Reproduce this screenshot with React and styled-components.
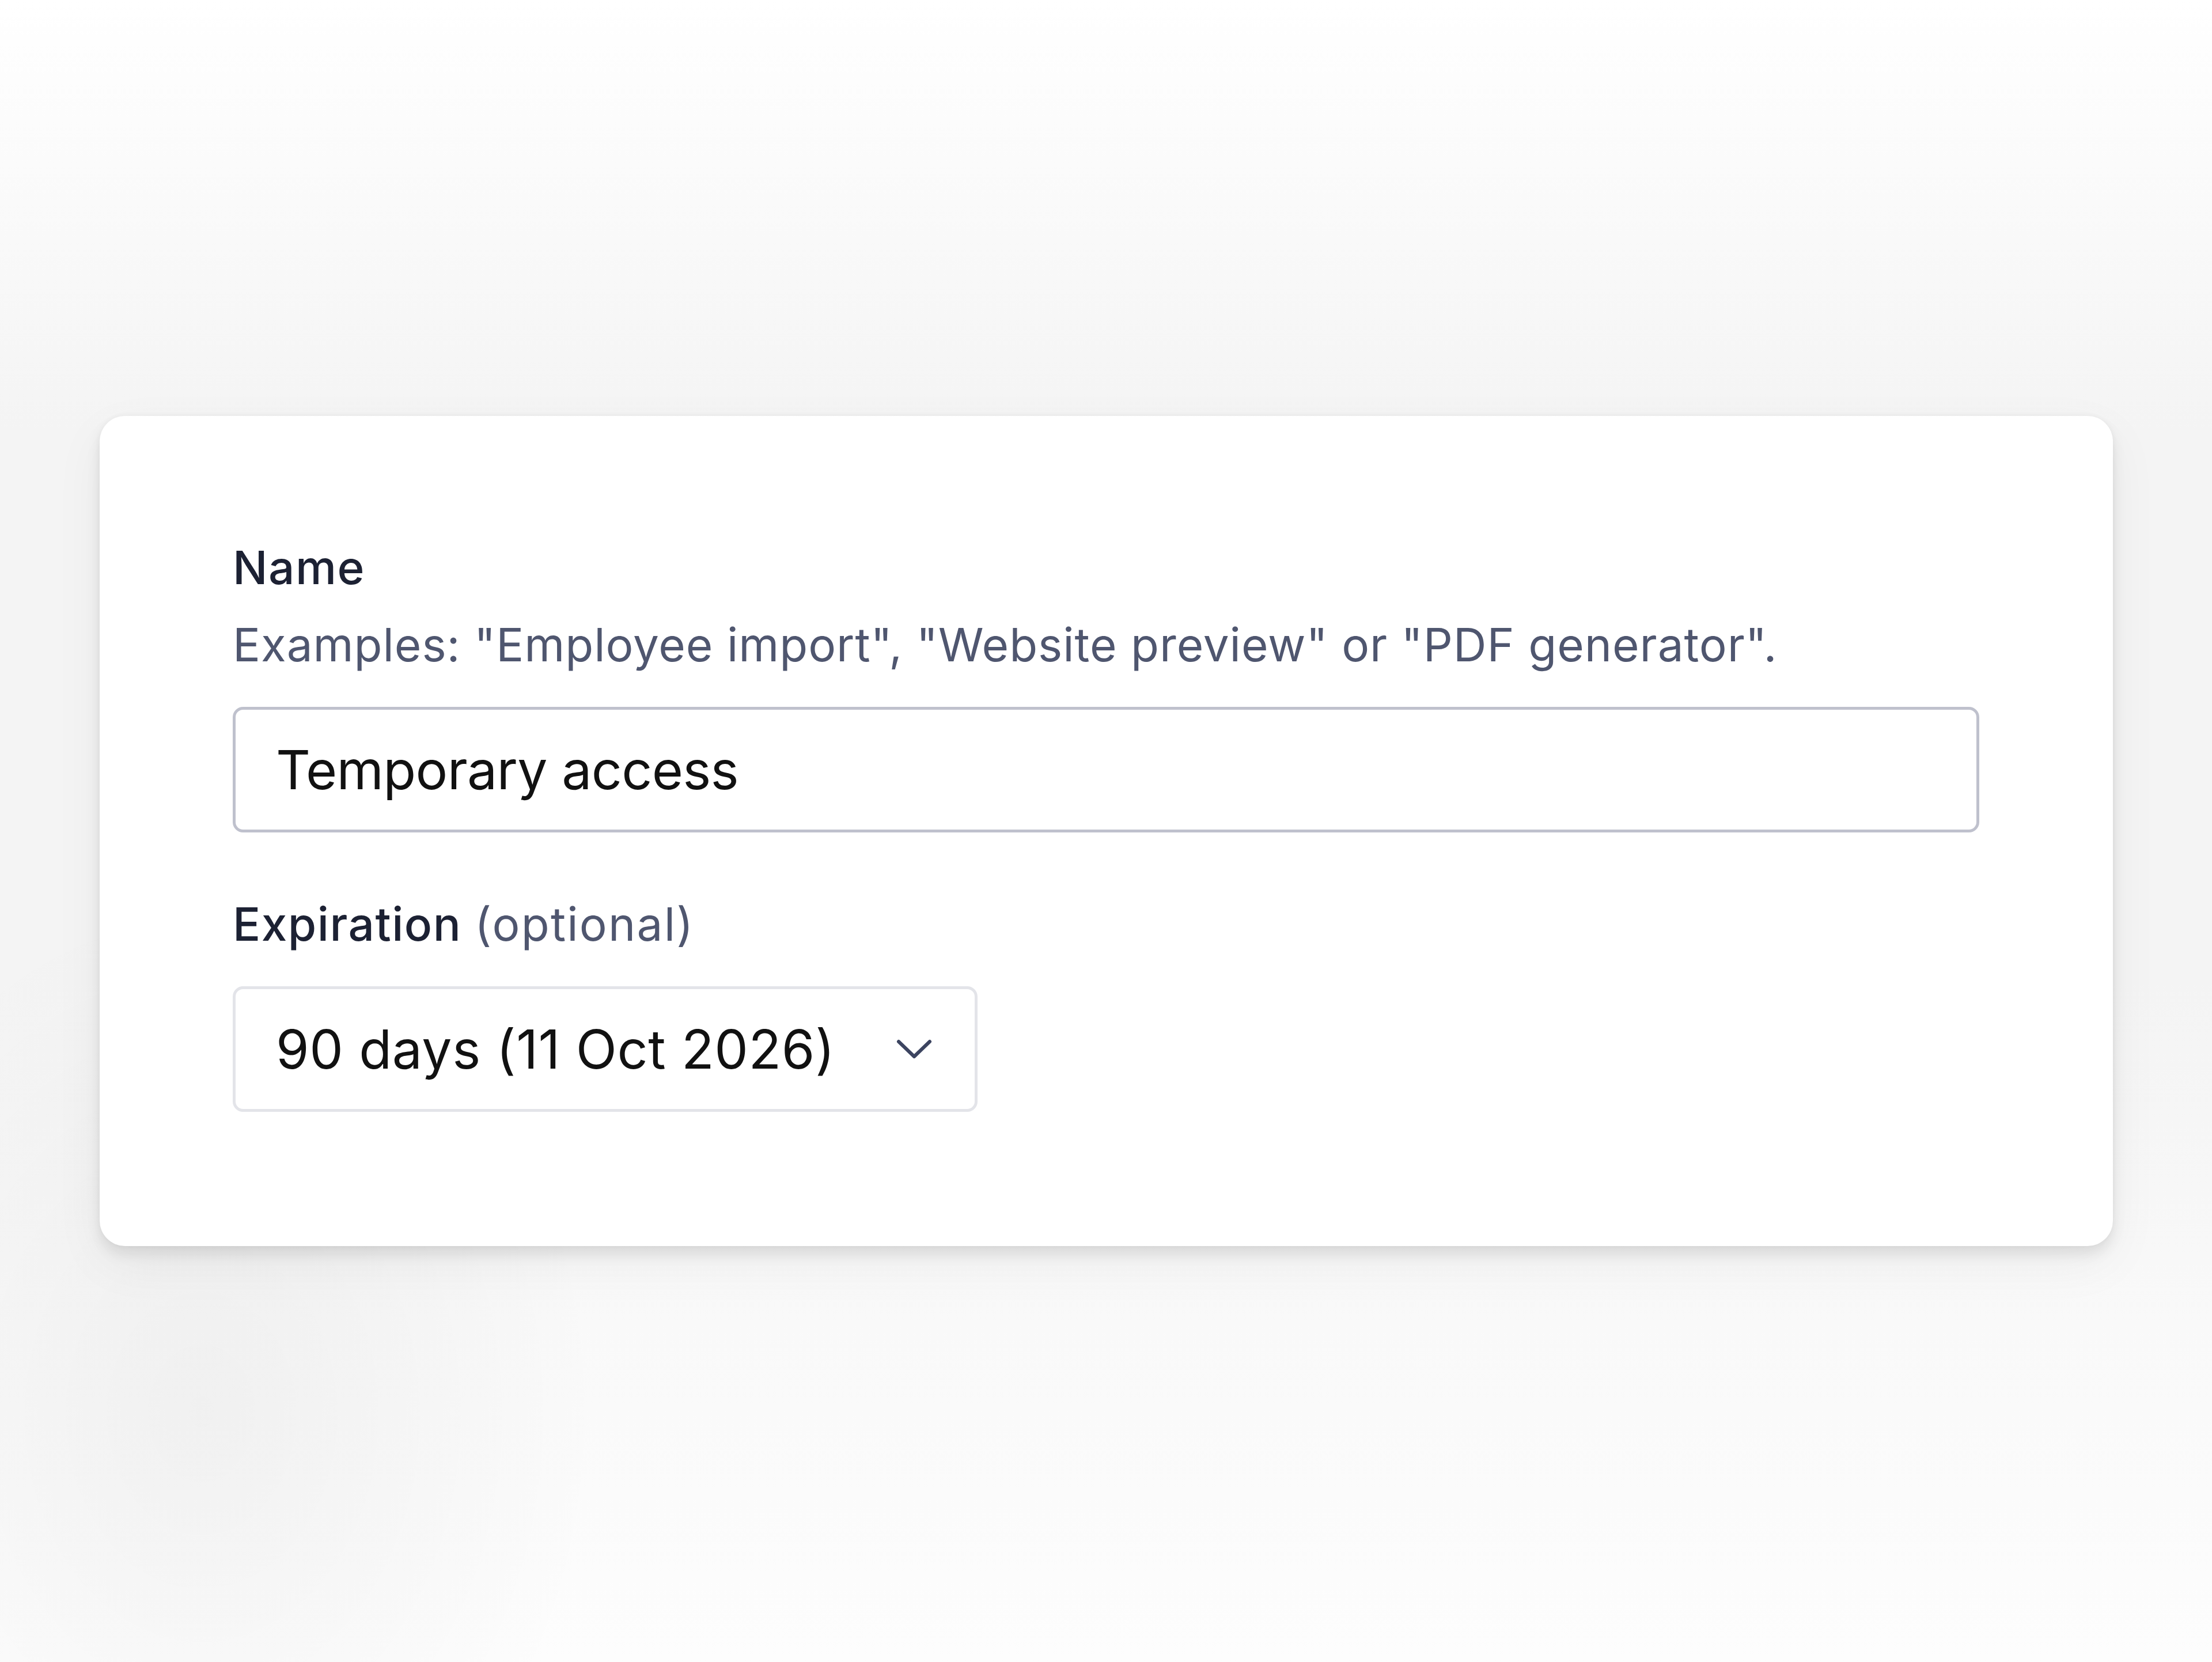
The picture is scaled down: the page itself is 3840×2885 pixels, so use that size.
import React from "react";
import styled, { createGlobalStyle } from "styled-components";

const GlobalStyle = createGlobalStyle`
  html, body {
    margin: 0;
    padding: 0;
  }
  body {
    width: 3840px;
    height: 2885px;
    overflow: hidden;
    font-family: Inter, "Noto Sans", "Liberation Sans", sans-serif;
    background: #fcfcfc;
  }
`;

const Stage = styled.div`
  width: 3840px;
  height: 2885px;
  box-sizing: border-box;
  padding: 722px 172px 0 173px;
  background:
    radial-gradient(ellipse 700px 900px at 350px 2450px, rgba(0, 0, 0, 0.04), rgba(0, 0, 0, 0) 100%),
    linear-gradient(to bottom, #ffffff 0px, #fafafa 350px, #f4f4f4 750px, #f4f4f4 1700px, #f9f9f9 2300px, #fdfdfd 2885px);
`;

const Card = styled.div`
  background: #ffffff;
  border-radius: 44px;
  box-sizing: border-box;
  height: 1441px;
  padding: 207px 232px 0 231px;
  display: flex;
  flex-direction: column;
  box-shadow:
    0 14px 24px rgba(0, 0, 0, 0.09),
    0 30px 90px rgba(0, 0, 0, 0.05),
    0 0 10px rgba(0, 0, 0, 0.04);
`;

const Field = styled.div`
  display: flex;
  flex-direction: column;
  margin-top: ${(p) => p.$top || 0}px;
`;

const Label = styled.div`
  font-size: 80px;
  line-height: 112px;
  font-weight: 500;
  color: #1c2133;
  letter-spacing: 1.5px;
`;

const Muted = styled.span`
  font-weight: 400;
  color: #4f566f;
  letter-spacing: 2.2px;
`;

const Hint = styled.div`
  margin-top: 22px;
  font-size: 80px;
  line-height: 112px;
  font-weight: 400;
  color: #4f566f;
  letter-spacing: 0.95px;
`;

const TextInput = styled.div`
  margin-top: ${(p) => p.$top}px;
  height: 218px;
  box-sizing: border-box;
  border: 5px solid #bfc1cd;
  border-radius: 18px;
  display: flex;
  align-items: center;
  padding: 0 70px;
  font-size: 93px;
  letter-spacing: -0.7px;
  color: #111111;
  background: #ffffff;
`;

const SelectBox = styled.div`
  margin-top: 52px;
  width: 1293px;
  height: 218px;
  box-sizing: border-box;
  border: 5px solid #e3e4e9;
  border-radius: 18px;
  display: flex;
  align-items: center;
  justify-content: space-between;
  padding: 0 72px 0 70px;
  font-size: 93px;
  letter-spacing: 0.6px;
  color: #111111;
  background: #ffffff;
`;

const Chevron = styled.svg`
  width: 66px;
  height: 38px;
  flex: none;
`;

export default function App() {
  return (
    <>
      <GlobalStyle />
      <Stage>
        <Card>
          <Field>
            <Label>Name</Label>
            <Hint>
              Examples: "Employee import", "Website preview" or "PDF generator".
            </Hint>
            <TextInput $top={52}>Temporary access</TextInput>
          </Field>
          <Field $top={103}>
            <Label>
              Expiration <Muted>(optional)</Muted>
            </Label>
            <SelectBox>
              <span>90 days (11 Oct 2026)</span>
              <Chevron viewBox="0 0 66 38" fill="none">
                <polyline
                  points="6,6 33,32 60,6"
                  stroke="#3c4460"
                  strokeWidth="6"
                  strokeLinecap="round"
                  strokeLinejoin="round"
                />
              </Chevron>
            </SelectBox>
          </Field>
        </Card>
      </Stage>
    </>
  );
}
